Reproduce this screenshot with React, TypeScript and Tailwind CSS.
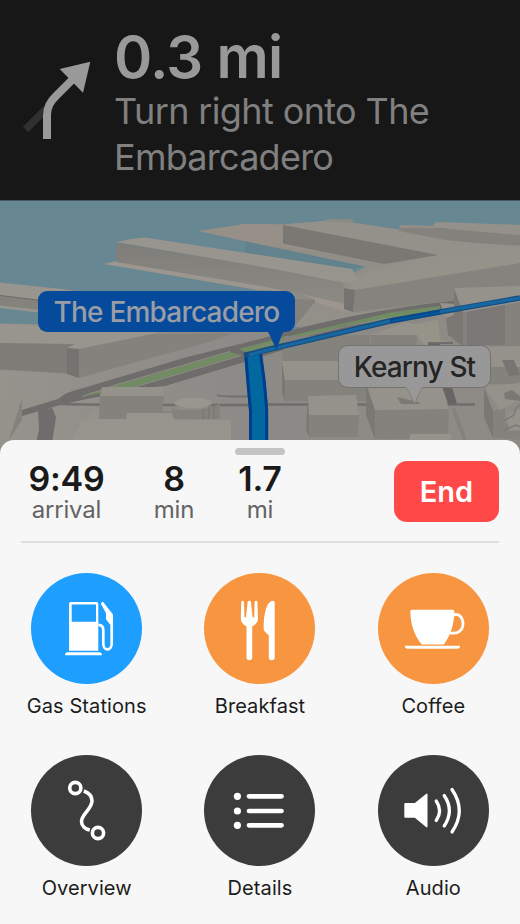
import type { ReactNode } from "react";

const water = "#678792";
const roof = "#95928b";
const wall = "#85827d";
const shade = "#7b7874";
const face = "#84827d";
const road = "#6f6d6b";
const grass = "#718c62";

function TurnArrow() {
  return (
    <svg className="h-[84px] w-[70px]" viewBox="22 58 70 84">
      <path d="M25.5 129.5 46 109" stroke="#303030" strokeWidth="7.5" />
      <path d="M47 139V116C47 107 50 102 56 96L74 78" fill="none" stroke="#999" strokeWidth="8" />
      <path d="M90.3 61.7 59.7 69 83 92.7Z" fill="#999" />
    </svg>
  );
}

function Block({ top, left, front }: { top: string; left?: string; front?: string }) {
  return (
    <g>
      {left && <polygon points={left} fill={shade} />}
      {front && <polygon points={front} fill={face} />}
      <polygon points={top} fill={roof} />
    </g>
  );
}

function CityMap() {
  return (
    <svg className="block h-[256px] w-full" viewBox="0 200 520 256">
      <defs>
        <linearGradient id="wallFade" x1="0" y1="0" x2="0" y2="1">
          <stop offset="0" stopColor="#7f7d79" />
          <stop offset="1" stopColor="#8d8a84" />
        </linearGradient>
        <linearGradient id="ground" x1="0" y1="0" x2="1" y2="0">
          <stop offset="0" stopColor="#96928c" />
          <stop offset="0.5" stopColor="#8c8a87" />
          <stop offset="1" stopColor="#8e8b86" />
        </linearGradient>
      </defs>
      <rect y="200" width="520" height="256" fill={water} />

      {/* left pier */}
      <polygon points="0,282.5 62,289 110,296 110,320 38,312.5 0,308" fill="#98958e" />
      <polygon points="0,295 60,302 60,312 0,305.5" fill={wall} />
      <path d="M0 295.5 45 301" stroke="#6f6d6a" strokeWidth="1" />

      {/* main land mass */}
      <polygon points="0,323.5 300,330 300,296 352,282 520,300 520,456 0,456" fill="url(#ground)" />

      {/* north-east piers */}
      <polygon points="199,231 245,224 283,224.5 325,221 326,219 352,219 354,223 395,229 399,229 400,225 433,226 436,222 520,225 520,310 352,312 300,300 365,267 260,244.5" fill="#918e88" />
      <polygon points="199,231 245,224 283,224.5 283,243.5 320,252 260,244.5" fill="#979088" />
      <polygon points="283,224.5 325,221 355,223 395,229 445,235 520,245 520,266 360,290 348,281 380,267 438,255" fill="#94918a" />
      <polygon points="283,225 438,255 384,264 283,243.5" fill="#7b7773" />
      <polygon points="399,228 445,228 475,243 445,240 399,231" fill={wall} />
      <polygon points="445,229 520,235 520,246 475,243 447,238" fill="#83817c" />
      <polygon points="400,225 433,226 436,222 520,225 520,235 445,228" fill="#94918a" />
      <path d="M325 221l2-2h25l1 4" fill="#8b8983" />
      <polygon points="245,241.3 260,244.5 365,266.5 349,269.5 245,252.5" fill="#62828d" />

      {/* long central pier */}
      <polygon points="104,264 116,261 260,284 352,306 352,315 260,290.5" fill="#9c968f" />
      <polygon points="116,242.5 260,266.5 343,282 345,303 260,286 116,262" fill="url(#wallFade)" />
      <polygon points="116,242 134,238.5 145,237.5 260,255 352,269 360,283 343,282.5 260,266.5" fill="#98958e" />

      {/* crossing pier */}
      <polygon points="344,288 520,262 520,290 456,300 353,312 344,309" fill="#85837d" />
      <polygon points="344,288 355,289 353,312 344,309" fill="#75736f" />
      <polygon points="344,288 358,284 352,280 400,272 520,245 520,263 355,290" fill="#95928a" />

      {/* low buildings below the pier */}
      <polygon points="260,289 300,294 315,299 315,314 294,325 260,335" fill="#8e8b85" />
      <polygon points="294,299 315,300 315,314 294,324" fill="#84817d" />
      <polygon points="315,302 348,312 400,313 345,323 294,327" fill="#93908a" />

      {/* waterfront warehouses */}
      <polygon points="0,324 38,326 160,331 150,335 79,349 0,343" fill="#98958f" />
      <polygon points="0,343 75,344 67,348 67,373.5 0,369.5" fill="#7f7c78" />
      <polygon points="79,349 152,334 235,333 205,343 79,378" fill="#84827d" />
      <polygon points="67,348 79,349 79,378 67,374" fill="#75726f" />

      {/* boulevard */}
      <path d="M22 410 58 399Q68 391 80 389L187 357 260 339Q350 312 455 300.5V307L440 313Q320 337 248 361L165 386 143 388 82 400 60 405 22 416Z" fill={road} />
      <polygon points="82,396.5 117,385 230,352 241,355 133,387" fill={grass} />
      <polygon points="239,349 282,337.500 337,325 393,312 440,306 440,313 390,321 347,325 282,343 248,353" fill={grass} />
      <path d="M82 396.500 117 384.500 230 351.500M133 387.500 241 355.500" fill="none" stroke="#918e88" strokeWidth="1" />
      <path d="M262 346 350 325.500 392 317" fill="none" stroke="#8b8984" strokeWidth="1" />

      {/* left blocks */}
      <polygon points="38,410 52,408 56,417 50,456 33,456 39,430" fill="#6f6d6b" />
      <path d="M60 404Q90 405 250 405" fill="none" stroke="#706e6c" strokeWidth="2.5" />
      <path d="M217 395Q220 397 250 396.5" fill="none" stroke="#73716f" strokeWidth="2" />
      <Block top="0,403 22,398 8,440 0,440" front="22,398 22,420 9,440" />
      <Block top="102,387 163,387 164,396 100,396" front="100,396 164,396 162,420 99,420" />
      <Block top="90,411 99,410 99,419 90,420" front="162,411 178,412 170,421 162,421" />
      <ellipse cx="193" cy="403" rx="19" ry="5" fill="#999690" />
      <path d="M172 408Q193 414 220 404V419H172Z" fill="#85827e" />
      <path d="M203 409V419M209 407V419M214 405V419" stroke="#777470" strokeWidth="1" />
      <polygon points="82,419 126,419 127,413 172,413 174,420 231,420 231,456 65,456" fill="#97948e" />

      {/* right blocks */}
      <Block top="282,361 370,361 373,376 284,376" front="284,336 370,335 370,361 282,361" />
      <Block top="371,335 405,322 415,324 417,335" front="371,335 417,335 417,347 371,347" />
      <polygon points="410,325 438,320 440,340 454,343 424,345" fill="#969389" />
      <Block top="440,303 456,304 463,311 446,318" left="446,318 463,311 463,345 448,335" />
      <Block top="454,288 520,286 520,302 463,312" front="463,312 520,302 520,346 463,346" left="454,288 463,312 463,346 454,340" />
      <polygon points="467,312 505,305 505,345 467,345" fill="#7b7875" />
      <path d="M268 404.5H475" stroke="#6f6d6b" strokeWidth="2.3" />
      <polygon points="428,344 440,344 457,404 448,404" fill="#676563" />
      <path d="M428 343H453" stroke="#6e6c6a" strokeWidth="2" />
      <Block top="282,361 367,361 369,380 285,380" front="285,380 369,380 369,401 285,401" left="282,361 285,380 285,401 282,392" />
      <Block top="308,396 356,395 359,415 309,415" front="309,415 359,415 358,437 309,437" left="308,396 309,415 309,437 306,430" />
      <Block top="366,383 440,382 449,409 375,410" front="375,410 449,409 448,439 375,439" left="366,383 375,410 375,439 366,415" />
      <polygon points="397,397 418,402 421,404 401,404" fill="#7c7975" />
      <Block top="470,347 520,346 520,367 492,367" front="485,367 520,367 520,384 485,384" />
      <polygon points="502,360 514,360 520,375 509,376" fill="#777571" />
      <Block top="484,387 520,383 520,400 500,410" front="493,411 505,408 505,438 493,438" left="484,387 493,411 493,438 484,417" />
      <polygon points="504,393 512,390 520,396 520,401 505,399" fill="#7b7874" />
      <Block top="507,415 517,410 520,410 520,430 509,431" front="502,421 520,431 520,440 502,438" />
      <path d="M504 421l10-6 2-7 4-3M503 431l13-6 4 2" stroke="#7d7a76" strokeWidth="1.5" fill="none" />
      <path d="M453 408 465 440" stroke="#85827e" strokeWidth="4" />
      <polygon points="411,434 451,434 451,440 409,440" fill="#96938d" />

      {/* route */}
      <path d="M244 355 260 350.5 262 357Q266 380 268 410V456H249V410Z" fill="#03689f" />
      <path d="M246 355Q248 385 250.5 410V456M260.5 353Q265 382 266.7 410V456" fill="none" stroke="#003e8c" strokeWidth="3" />
      <path d="M244 355.5 262 351Q325 336 390 321 455 309 520 298" fill="none" stroke="#174d82" strokeWidth="5.5" />
      <path d="M249 355 262 351.5Q325 336 390 321 455 309 520 298" fill="none" stroke="#1767a0" strokeWidth="3.2" />
      <path d="M390 321 440 312" stroke="#06498d" strokeWidth="4.5" />
      <path d="M392 321 440 312.5" stroke="#075b9d" strokeWidth="1.5" />
      <path d="M0 200.5H520" stroke="#465860" strokeWidth="1" />
    </svg>
  );
}

function GasIcon() {
  return (
    <g>
      <path fillRule="evenodd" d="M40 29H65.5Q67.3 29 67.3 31V77.7H38V31Q38 29 40 29ZM40.7 31.4V48.8H65V31.4Z" />
      <path d="M35.8 79.3H69.2Q71 80.3 71 82.3H34Q34 80.3 35.8 79.3Z" />
      <path d="M67.3 51.8C71 51.8 72.3 53.5 72.3 57V70.5C72.3 78.3 80.7 78.3 80.7 70.5V45" fill="none" stroke="white" strokeWidth="2.7" />
      <path d="M71.8 28.6 82 41.5V51.5H79L75 46.2V40.3L69.8 30.6Z" />
    </g>
  );
}

function BreakfastIcon() {
  return (
    <g>
      <path d="M38.5 27.7Q39.8 27.7 40 29L40.4 43.5Q40.5 44.4 41.2 44.4 42 44.4 42.1 43.5L43.6 29Q43.9 27.7 45.3 27.7 46.7 27.7 47 29L48.5 43.5Q48.6 44.4 49.4 44.4 50.1 44.4 50.2 43.5L50.6 29Q50.8 27.7 52.1 27.7 53.3 27.7 53.4 29L54 45Q54 50.5 48.2 53.5V84.5Q48.2 87.3 45.3 87.3 42.5 87.3 42.5 84.5V53.5Q36.8 50.5 36.8 45L37.3 29Q37.4 27.7 38.5 27.7Z" />
      <path d="M69 27.7Q70.7 27.7 70.7 29.5V84.5Q70.7 87.3 67.7 87.3 64.8 87.3 64.8 84.5V62.5L60.7 58.5Q59.7 57.5 59.7 55.5C59.7 42 62 28.5 69 27.7Z" />
    </g>
  );
}

function CoffeeIcon() {
  return (
    <g>
      <path d="M34 36.7H74.7Q76.5 36.7 76.4 38.7C76 51.5 72.5 63 65.7 71.4H43.8C36.5 63 32.6 51.5 32.3 38.7Q32.2 36.7 34 36.7Z" />
      <path d="M75.5 42C81 40 85 44.5 85 50.8 85 57 80 61.5 71.5 59.8" fill="none" stroke="white" strokeWidth="2.8" />
      <path d="M27 72.8H82Q82.4 75.7 79 75.7H30Q26.6 75.7 27 72.8Z" />
    </g>
  );
}

function OverviewIcon() {
  return (
    <g fill="none" stroke="white" strokeWidth="3.6">
      <circle cx="44.3" cy="33" r="5.6" />
      <circle cx="67" cy="78" r="5.6" />
      <path d="M52.8 36C58.5 38 61 41.8 61 46 61 54 50.5 59 50.5 66.5 50.5 71 54.5 74 58.8 75" />
    </g>
  );
}

function DetailsIcon() {
  return (
    <g stroke="white" strokeWidth="4.7" strokeLinecap="round">
      {[41.3, 56, 70.3].map((y) => (
        <g key={y}>
          <circle cx="33.4" cy={y} r="3.6" stroke="none" />
          <path d={`M45 ${y}H77.5`} />
        </g>
      ))}
    </g>
  );
}

function AudioIcon() {
  return (
    <g>
      <path d="M27.3 48H36.8L48 38.9Q49.5 38 49.5 39.5V71.5Q49.5 73 48 72.1L36.8 62.7H27.3Q26.3 62.7 26.3 61.7V49Q26.3 48 27.3 48Z" />
      <path
        d="M58.2 46Q65 55.7 58.2 65.5M66.2 40.5Q76.500 55.7 66.2 71M74 34.5Q88.500 55.7 74 77"
        fill="none"
        stroke="white"
        strokeWidth="3.3"
        strokeLinecap="round"
      />
    </g>
  );
}

function Action({ color, label, children }: { color: string; label: string; children: ReactNode }) {
  return (
    <button className="flex flex-col items-center">
      <span className={`size-[111px] rounded-full ${color}`}>
        <svg className="size-full" viewBox="0 0 111 111" fill="white">
          {children}
        </svg>
      </span>
      <span className="mt-[9px] text-[20px] leading-[26px] tracking-[0.08px] text-[#1c1c1c]">{label}</span>
    </button>
  );
}

function Stat({ value, unit, className }: { value: string; unit: string; className: string }) {
  return (
    <div className={`flex flex-col items-center ${className}`}>
      <span className="text-[34px] leading-[36px] font-semibold tracking-[-0.2px] text-[#1a1a1a]">{value}</span>
      <span className="text-[24px] leading-[26px] tracking-[-0.2px] text-[#636363]">{unit}</span>
    </div>
  );
}

export default function App() {
  return (
    <div className="flex h-[924px] w-[520px] flex-col overflow-hidden bg-[#171717] font-['Inter','Liberation_Sans',sans-serif]">
      <header className="flex h-[200px] shrink-0 items-start pl-[22px]">
        <div className="pt-[58px]">
          <TurnArrow />
        </div>
        <div className="flex flex-col pt-[26px] pl-[22px] whitespace-nowrap">
          <span className="text-[58px] leading-[62px] font-semibold tracking-[-0.7px] text-[#999]">0.3 mi</span>
          <span className="text-[36px] leading-[46px] tracking-[-0.62px] text-[#808080]">Turn right onto The</span>
          <span className="text-[36px] leading-[46px] tracking-[-0.75px] text-[#808080]">Embarcadero</span>
        </div>
      </header>

      <section className="relative h-[256px] shrink-0">
        <CityMap />
        <div className="absolute top-[91px] left-[38px] flex h-[41px] w-[257px] items-center justify-center rounded-[9px] bg-[#064a9c]">
          <span className="text-[28px] leading-none font-medium tracking-[-0.8px] whitespace-nowrap text-[#999da5]">The Embarcadero</span>
          <svg className="absolute top-[40px] left-[228px] h-5 w-5" viewBox="0 0 20 20">
            <path d="M1 0H19Q16 2 14 9L10.5 19 5 7Q3 2 1 0Z" fill="#064a9c" />
          </svg>
        </div>
        <div className="absolute top-[145px] left-[338px] flex h-[43px] w-[153px] items-center justify-center rounded-[10px] border border-[#74726f] bg-[#989898]">
          <span className="text-[28px] leading-none font-medium tracking-[-0.9px] whitespace-nowrap text-[#252525]">Kearny St</span>
          <svg className="absolute top-[40px] left-[65px] h-5 w-5" viewBox="0 0 20 20">
            <path d="M1 0H19L17.500 2Q15 7 10.500 18.500 6 7 2.500 2Z" fill="#989898" />
            <path d="M2.500 2Q6 7 10.500 18.500 15 7 17.500 2" fill="none" stroke="#7d7b78" strokeWidth="0.8" />
          </svg>
        </div>
      </section>

      <main className="relative -mt-4 flex grow flex-col rounded-t-[14px] bg-[#f7f7f7]">
        <div className="mx-auto mt-2 h-[7px] w-[50px] shrink-0 rounded-full bg-[#c4c4c4]" />
        <div className="mx-[21px] flex h-[88px] shrink-0 items-start border-b-2 border-[#dedede] pt-[6px]">
          <Stat value="9:49" unit="arrival" className="w-[91px]" />
          <Stat value="8" unit="min" className="ml-[18px] w-[88px]" />
          <Stat value="1.7" unit="mi" className="ml-[2px] w-[80px]" />
          <button className="ml-auto h-[61px] w-[105px] rounded-[13px] bg-[#ff4848] text-[29px] font-semibold text-white">End</button>
        </div>
        <div className="mt-[30px] grid grid-cols-3 gap-y-[36px]">
          <Action color="bg-[#1e9eff]" label="Gas Stations"><GasIcon /></Action>
          <Action color="bg-[#f79540]" label="Breakfast"><BreakfastIcon /></Action>
          <Action color="bg-[#f79540]" label="Coffee"><CoffeeIcon /></Action>
          <Action color="bg-[#3c3c3c]" label="Overview"><OverviewIcon /></Action>
          <Action color="bg-[#3c3c3c]" label="Details"><DetailsIcon /></Action>
          <Action color="bg-[#3c3c3c]" label="Audio"><AudioIcon /></Action>
        </div>
      </main>
    </div>
  );
}
